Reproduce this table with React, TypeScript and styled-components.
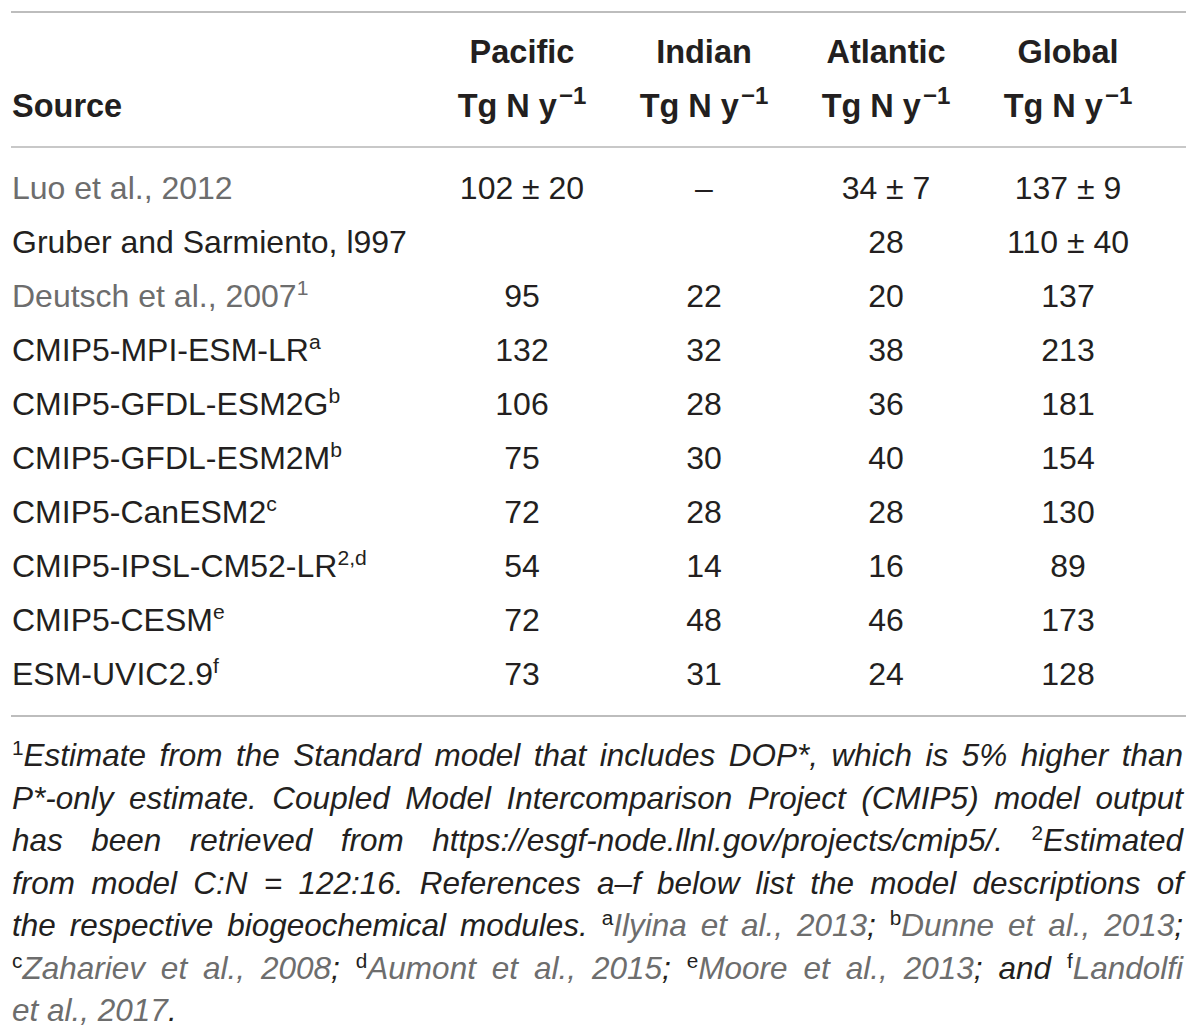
import React from "react";
import styled, { createGlobalStyle } from "styled-components";

const Global = createGlobalStyle`
  html, body { margin: 0; padding: 0; background: #ffffff; }
  body { font-family: "Liberation Sans", Arial, Helvetica, sans-serif; color: #231f20; }
`;

const Page = styled.div`
  width: 1200px;
  box-sizing: border-box;
  padding: 11px 14px 0 11px;
`;

const Table = styled.div`
  border-top: 2px solid #bdbdbd;
  border-bottom: 2px solid #bdbdbd;
`;

const Grid = styled.div<{ $head?: boolean }>`
  display: grid;
  grid-template-columns: 420px repeat(4, 182px) 1fr;
  align-items: end;
  font-size: 32px;
  line-height: 54px;
  ${(p) =>
    p.$head
      ? `font-weight: 700; font-size: 32.5px; padding: 12px 0 13px; border-bottom: 2px solid #c8c8c8;`
      : ``}
`;

const Body = styled.div`
  padding: 13px 0 14px;
`;

const Cell = styled.div<{ $grey?: boolean; $left?: boolean }>`
  text-align: ${(p) => (p.$left ? "left" : "center")};
  padding-left: ${(p) => (p.$left ? "1px" : "0")};
  color: ${(p) => (p.$grey ? "#6d6d6d" : "#231f20")};
  white-space: nowrap;
`;

const Sup = styled.sup<{ $big?: boolean }>`
  font-size: ${(p) => (p.$big ? "0.74em" : "0.66em")};
  line-height: 0;
  vertical-align: 0.55em;
  font-style: normal;
  margin-left: ${(p) => (p.$big ? "2px" : "0")};
`;

const Foot = styled.div`
  padding: 17px 3px 0 1px;
  font-size: 31.5px;
  font-style: italic;
  line-height: 42.5px;
  color: #231f20;
`;

const FootLine = styled.div<{ $last?: boolean }>`
  white-space: nowrap;
  text-align: ${(p) => (p.$last ? "left" : "justify")};
  text-align-last: ${(p) => (p.$last ? "left" : "justify")};
`;

const Ref = styled.span`
  color: #6d6d6d;
`;

type Row = { src: string; sup?: string; grey?: boolean; vals: string[] };

const rows: Row[] = [
  { src: "Luo et al., 2012", grey: true, vals: ["102 ± 20", "–", "34 ± 7", "137 ± 9"] },
  { src: "Gruber and Sarmiento, l997", vals: ["", "", "28", "110 ± 40"] },
  { src: "Deutsch et al., 2007", sup: "1", grey: true, vals: ["95", "22", "20", "137"] },
  { src: "CMIP5-MPI-ESM-LR", sup: "a", vals: ["132", "32", "38", "213"] },
  { src: "CMIP5-GFDL-ESM2G", sup: "b", vals: ["106", "28", "36", "181"] },
  { src: "CMIP5-GFDL-ESM2M", sup: "b", vals: ["75", "30", "40", "154"] },
  { src: "CMIP5-CanESM2", sup: "c", vals: ["72", "28", "28", "130"] },
  { src: "CMIP5-IPSL-CM52-LR", sup: "2,d", vals: ["54", "14", "16", "89"] },
  { src: "CMIP5-CESM", sup: "e", vals: ["72", "48", "46", "173"] },
  { src: "ESM-UVIC2.9", sup: "f", vals: ["73", "31", "24", "128"] },
];

const oceans = ["Pacific", "Indian", "Atlantic", "Global"];

const Unit = () => (
  <>
    Tg N y<Sup $big>−1</Sup>
  </>
);

export default function App() {
  return (
    <Page>
      <Global />
      <Table>
        <Grid $head>
          <Cell $left>Source</Cell>
          {oceans.map((o) => (
            <Cell key={o}>
              {o}
              <br />
              <Unit />
            </Cell>
          ))}
          <div />
        </Grid>
        <Body>
          {rows.map((r) => (
            <Grid key={r.src + (r.sup || "")}>
              <Cell $left $grey={r.grey}>
                {r.src}
                {r.sup && <Sup>{r.sup}</Sup>}
              </Cell>
              {r.vals.map((v, i) => (
                <Cell key={i}>{v}</Cell>
              ))}
              <div />
            </Grid>
          ))}
        </Body>
      </Table>
      <Foot>
        <FootLine>
          <Sup>1</Sup>Estimate from the Standard model that includes DOP*, which is 5% higher than
        </FootLine>
        <FootLine>
          P*-only estimate. Coupled Model Intercomparison Project (CMIP5) model output
        </FootLine>
        <FootLine>
          has been retrieved from https://esgf-node.llnl.gov/projects/cmip5/. <Sup>2</Sup>Estimated
        </FootLine>
        <FootLine>
          from model C:N = 122:16. References a–f below list the model descriptions of
        </FootLine>
        <FootLine>
          the respective biogeochemical modules. <Sup>a</Sup>
          <Ref>Ilyina et al., 2013</Ref>; <Sup>b</Sup>
          <Ref>Dunne et al., 2013</Ref>;
        </FootLine>
        <FootLine>
          <Sup>c</Sup>
          <Ref>Zahariev et al., 2008</Ref>; <Sup>d</Sup>
          <Ref>Aumont et al., 2015</Ref>; <Sup>e</Sup>
          <Ref>Moore et al., 2013</Ref>; and <Sup>f</Sup>
          <Ref>Landolfi</Ref>
        </FootLine>
        <FootLine $last>
          <Ref>et al., 2017</Ref>.
        </FootLine>
      </Foot>
    </Page>
  );
}
